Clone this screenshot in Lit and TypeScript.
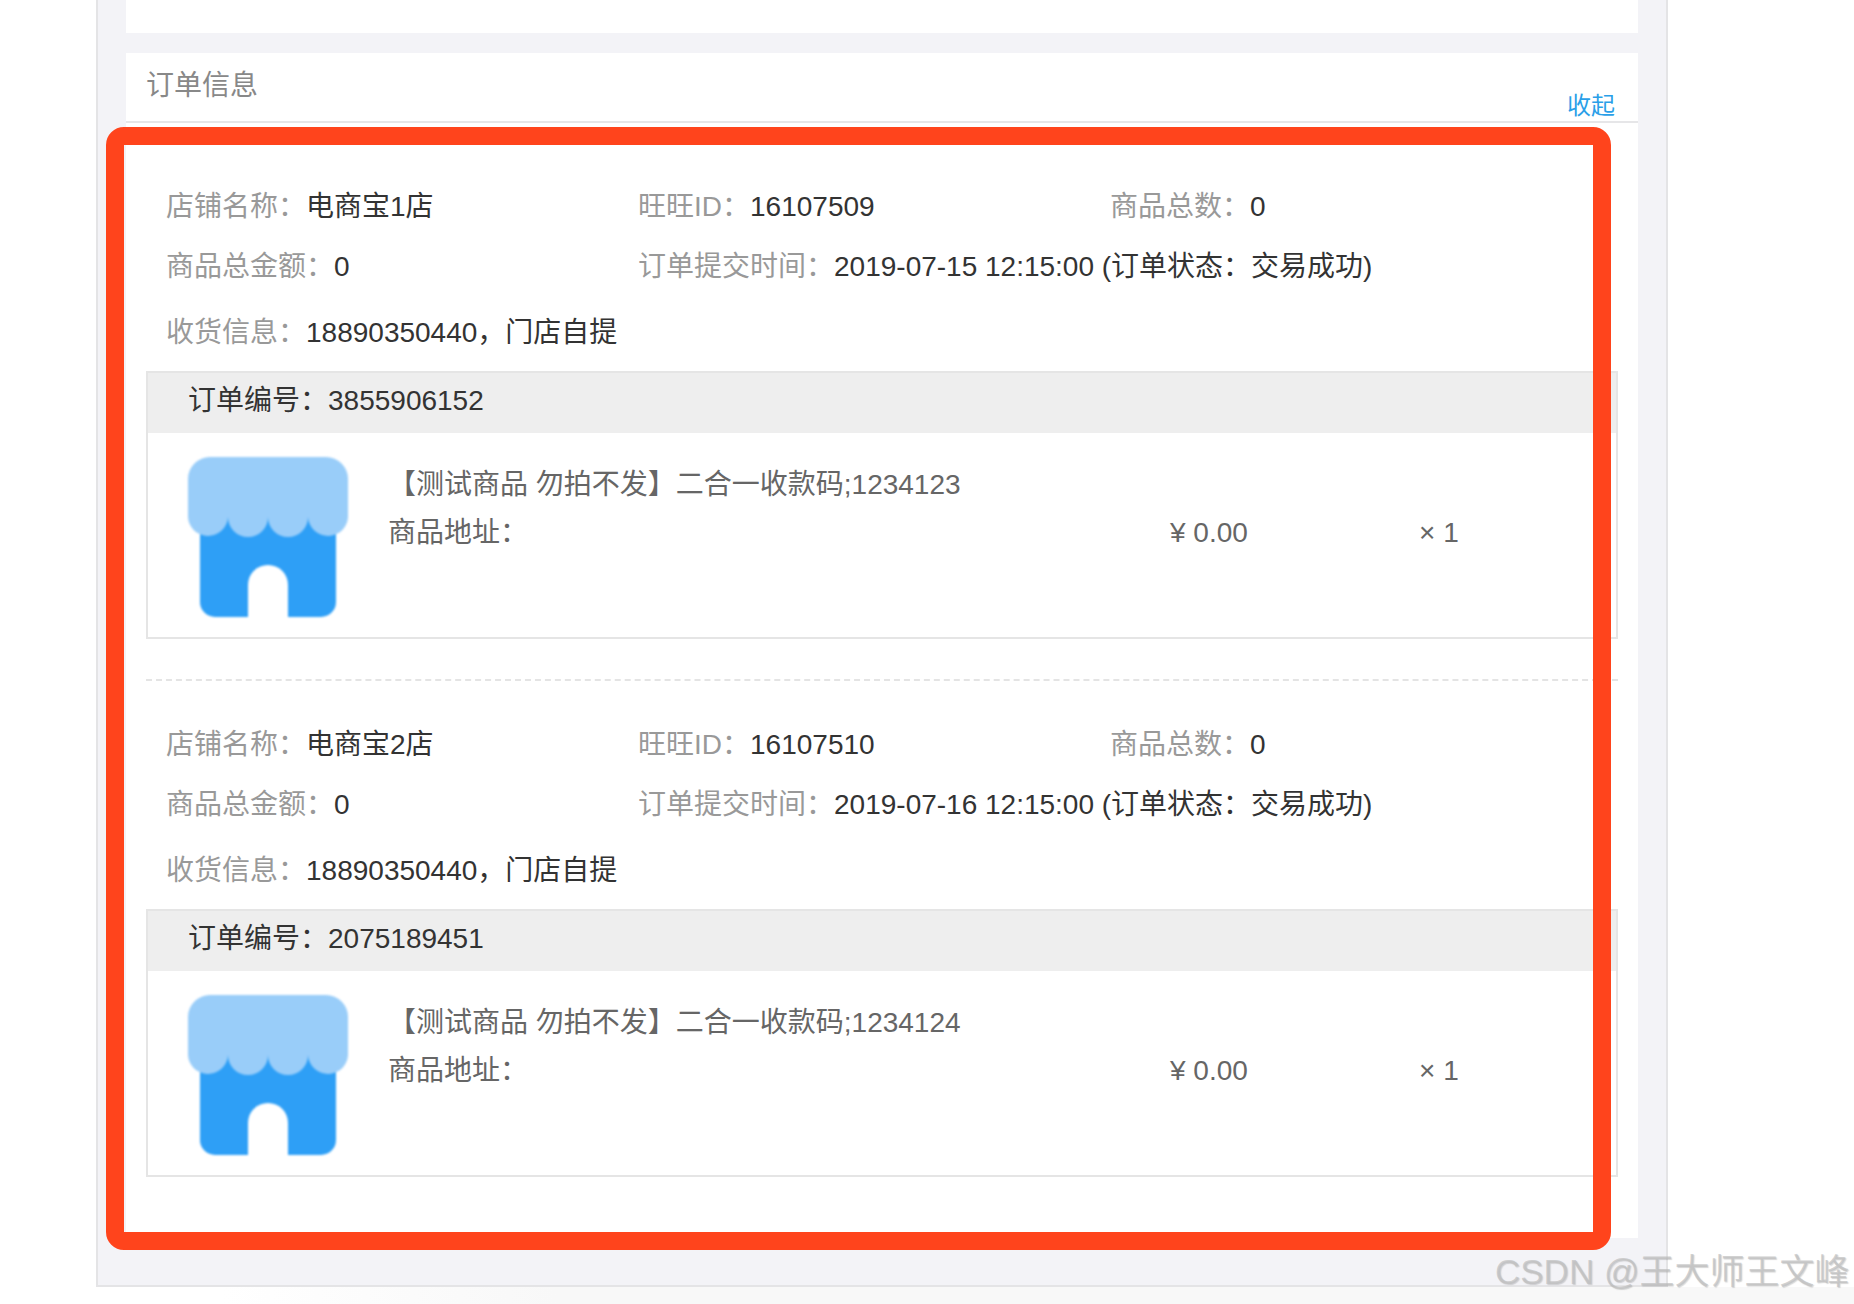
import { LitElement, html, css, svg } from "lit";
import { customElement } from "lit/decorators.js";

interface Order {
  shop: string;
  wangwang: string;
  time: string;
  no: string;
  goods: string;
}

const ORDERS: Order[] = [
  { shop: "电商宝1店", wangwang: "16107509", time: "2019-07-15 12:15:00", no: "3855906152", goods: "【测试商品 勿拍不发】二合一收款码;1234123" },
  { shop: "电商宝2店", wangwang: "16107510", time: "2019-07-16 12:15:00", no: "2075189451", goods: "【测试商品 勿拍不发】二合一收款码;1234124" },
];

const shopIcon = svg`
  <rect x="12" y="40" width="136" height="120" rx="15" fill="#2e9ff6"></rect>
  <path d="M60 160V128a20 20 0 0 1 40 0V160Z" fill="#fff"></path>
  <path d="M22 0H138A22 22 0 0 1 160 22V58A20 20 0 0 1 120 60A20 20 0 0 1 80 60A20 20 0 0 1 40 60A20 20 0 0 1 0 58V22A22 22 0 0 1 22 0Z" fill="#99cdf9"></path>
`;

@customElement("app-root")
export class AppRoot extends LitElement {
  static styles = css`
    :host {
      display: block;
      position: relative;
      width: 1854px;
      height: 1304px;
      overflow: hidden;
      background: #fff;
      font-family: "Liberation Sans", "Noto Sans CJK SC", sans-serif;
      font-size: 28px;
      color: #333;
    }
    .panel {
      box-sizing: border-box;
      width: 1572px;
      height: 1287px;
      margin-left: 96px;
      padding: 0 28px;
      background: #f3f3f7;
      border: 2px solid #e4e4e6;
      border-top: 0;
    }
    .top-card {
      height: 33px;
      background: #fff;
    }
    .card {
      margin-top: 20px;
      background: #fff;
      height: 1185px;
    }
    .card-head {
      display: flex;
      justify-content: space-between;
      height: 68px;
      padding: 0 23px 0 20px;
      border-bottom: 2px solid #e6e6e8;
    }
    .card-title {
      line-height: 66px;
      color: #888;
    }
    .toggle {
      align-self: flex-end;
      font-size: 24px;
      line-height: 30px;
      color: #2a9fe8;
    }
    .orders {
      padding: 54px 20px 0 20px;
    }
    .divider {
      margin: 40px 0 34px;
      border-top: 2px dashed #e4e4e4;
    }
    .row {
      display: grid;
      grid-template-columns: 472px 472px 1fr;
      height: 60px;
      line-height: 60px;
      padding-left: 20px;
    }
    .row.wide {
      grid-template-columns: 472px 1fr;
    }
    .row.address {
      margin-top: 6px;
      margin-bottom: 8px;
      grid-template-columns: 1fr;
    }
    .label {
      color: #999;
    }
    .box {
      border: 2px solid #e5e5e5;
    }
    .box-head {
      height: 60px;
      padding-left: 40px;
      line-height: 56px;
      background: #eee;
    }
    .box-body {
      display: flex;
      height: 204px;
      box-sizing: border-box;
      padding: 24px 0 0 40px;
      color: #666;
    }
    .thumb {
      width: 160px;
      height: 160px;
      flex: none;
      filter: blur(1px);
    }
    .goods {
      width: 782px;
      margin-left: 40px;
      margin-top: 4px;
      line-height: 48px;
    }
    .price {
      width: 249px;
      line-height: 48px;
      margin-top: 52px;
    }
    .qty {
      line-height: 48px;
      margin-top: 52px;
    }
    .strip {
      height: 17px;
      background: linear-gradient(90deg, #fff 12%, #f8f8f8 30%, #f8f8f8 100%);
    }
    .annotation {
      position: absolute;
      left: 106px;
      top: 127px;
      width: 1505px;
      height: 1123px;
      box-sizing: border-box;
      border: 18px solid #ff441c;
      border-radius: 18px;
    }
    .watermark {
      position: absolute;
      left: 1495px;
      top: 1250px;
      font-size: 35px;
      line-height: 44px;
      white-space: nowrap;
      color: rgba(190, 190, 190, 0.7);
      text-shadow: 1px 1px 1px rgba(120, 120, 120, 0.3);
    }
  `;

  private renderOrder(o: Order, index: number) {
    return html`
      ${index > 0 ? html`<div class="divider"></div>` : ""}
      <div class="row">
        <div><span class="label">店铺名称：</span>${o.shop}</div>
        <div><span class="label">旺旺ID：</span>${o.wangwang}</div>
        <div><span class="label">商品总数：</span>0</div>
      </div>
      <div class="row wide">
        <div><span class="label">商品总金额：</span>0</div>
        <div><span class="label">订单提交时间：</span>${o.time} (订单状态：交易成功)</div>
      </div>
      <div class="row address">
        <div><span class="label">收货信息：</span>18890350440，门店自提</div>
      </div>
      <div class="box">
        <div class="box-head">订单编号：${o.no}</div>
        <div class="box-body">
          <svg class="thumb" viewBox="0 0 160 160">${shopIcon}</svg>
          <div class="goods">
            <div>${o.goods}</div>
            <div>商品地址：</div>
          </div>
          <div class="price">¥ 0.00</div>
          <div class="qty">× 1</div>
        </div>
      </div>
    `;
  }

  render() {
    return html`
      <div class="panel">
        <div class="top-card"></div>
        <div class="card">
          <div class="card-head">
            <div class="card-title">订单信息</div>
            <div class="toggle">收起</div>
          </div>
          <div class="orders">${ORDERS.map((o, i) => this.renderOrder(o, i))}</div>
        </div>
      </div>
      <div class="strip"></div>
      <div class="annotation"></div>
      <div class="watermark">CSDN @王大师王文峰</div>
    `;
  }
}
